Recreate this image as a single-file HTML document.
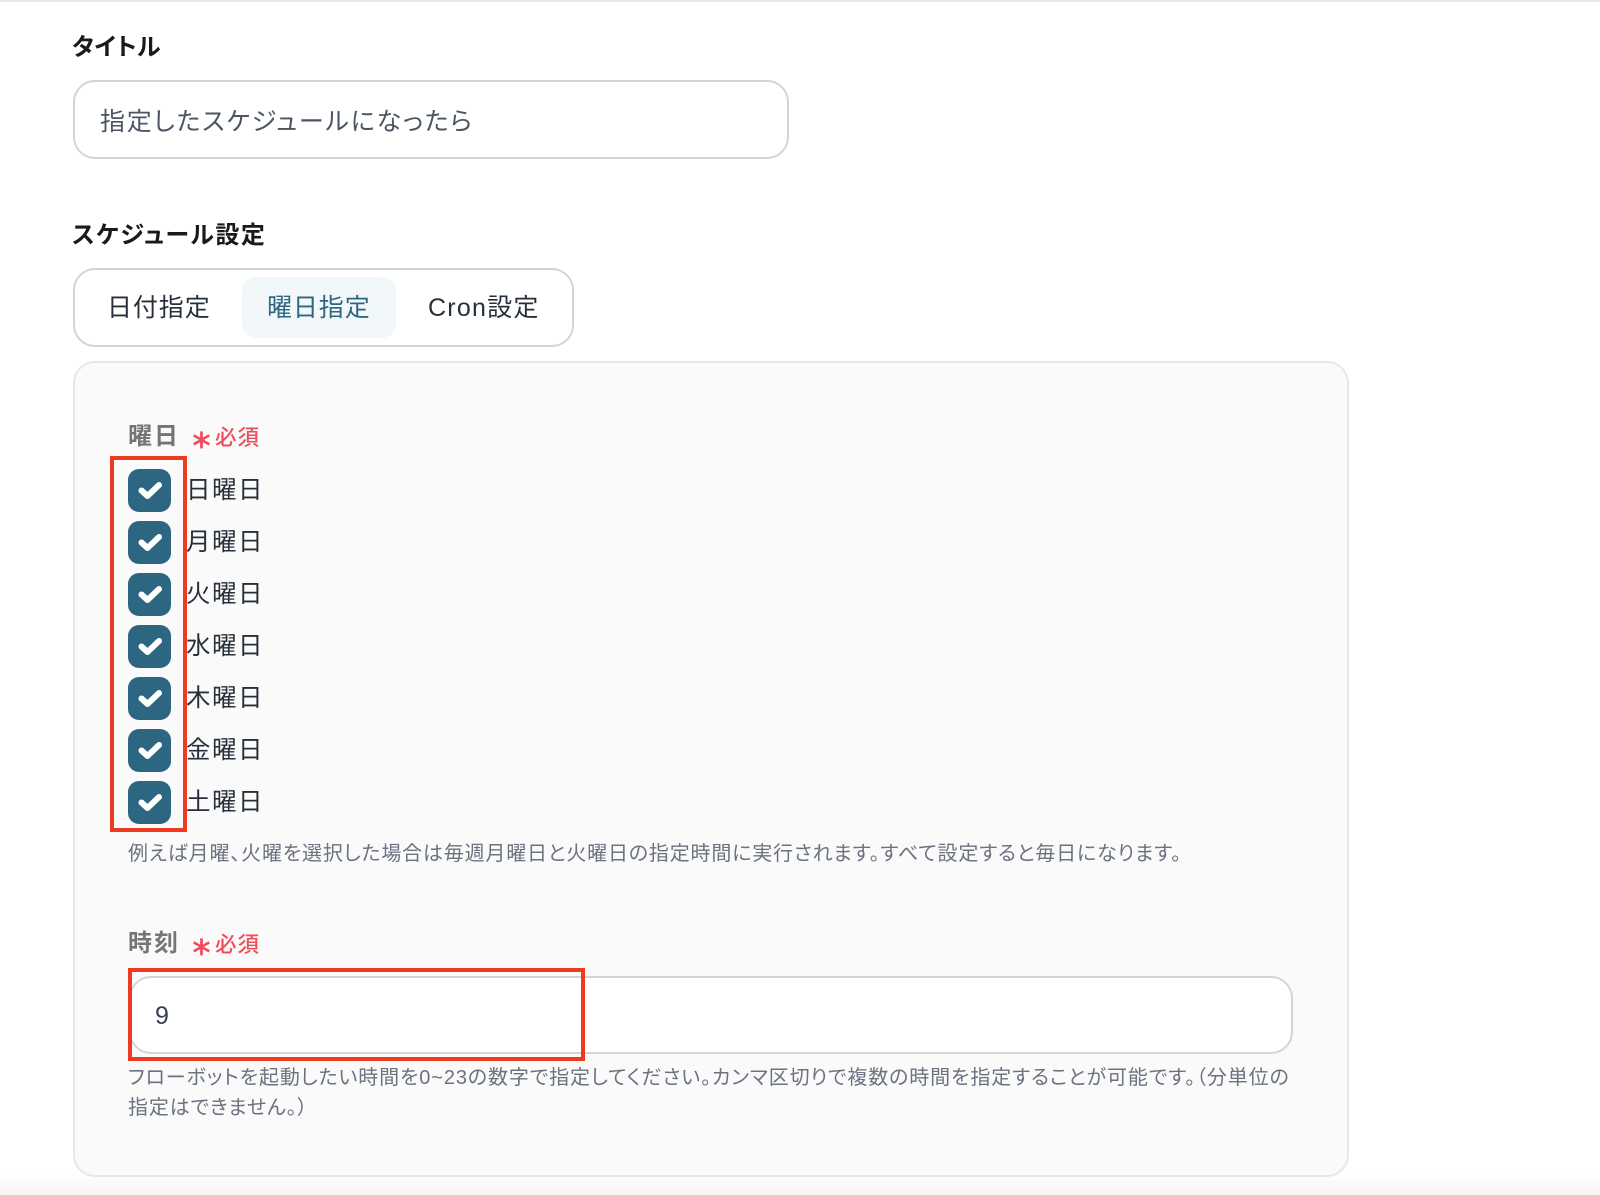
<!DOCTYPE html>
<html lang="ja">
<head>
<meta charset="utf-8">
<title>スケジュール設定</title>
<style>
html,body{margin:0;padding:0;background:#fff}
body{width:1600px;height:1195px;position:relative;overflow:hidden;font-family:"Liberation Sans","Noto Sans CJK JP",sans-serif;font-feature-settings:"palt"}
.a{position:absolute;white-space:nowrap}
.box{position:absolute;box-sizing:border-box;background:#fff;border:2px solid #d1d5db;border-radius:22px}
.h{font-size:24px;font-weight:700;color:#1a1a1a;line-height:30px}
.lab{font-size:24px;font-weight:700;color:#757575;line-height:30px;letter-spacing:2px}
.req{font-size:21.5px;font-weight:500;color:#ef4c5c;line-height:30px;letter-spacing:1px}
.star{font-family:"DejaVu Sans",sans-serif;font-size:36px;font-weight:400;color:#ef4c5c;line-height:30px;-webkit-text-stroke:.7px #ef4c5c}
.day{font-size:24.5px;color:#27303a;line-height:30px;letter-spacing:1.5px;left:186px}
.help{font-size:20px;color:#6b7280;line-height:30px;letter-spacing:.85px;left:128px}
.cb{position:absolute;left:128px;width:43px;height:43px;border-radius:11px;background:#2d6680}
.cb svg{display:block}
.red{position:absolute;box-sizing:border-box;border:4px solid #ee3a1f}
.tab{font-size:25px;line-height:30px;letter-spacing:.9px}
</style>
</head>
<body>
<div class="a" style="left:0;top:0;width:1600px;height:2px;background:#e7e7e7"></div>
<div class="a" style="left:0;top:1170px;width:1600px;height:25px;background:linear-gradient(#fff,#f6f6f6)"></div>

<div class="a h" style="left:72px;top:33px;letter-spacing:.5px">タイトル</div>
<div class="box" style="left:73px;top:80px;width:716px;height:79px"></div>
<div class="a" style="left:100px;top:107px;font-size:25px;line-height:30px;color:#4b5563;letter-spacing:1.8px">指定したスケジュールになったら</div>

<div class="a h" style="left:72px;top:221px;letter-spacing:1.5px">スケジュール設定</div>
<div class="box" style="left:73px;top:268px;width:501px;height:79px"></div>
<div class="a" style="left:242px;top:277px;width:154px;height:61px;border-radius:14px;background:#f2f8f9"></div>
<div class="a tab" style="left:107px;top:293px;color:#27303a">日付指定</div>
<div class="a tab" style="left:267px;top:293px;color:#2d6680">曜日指定</div>
<div class="a tab" style="left:428px;top:293px;color:#27303a;letter-spacing:1.25px">Cron設定</div>

<div class="box" style="left:73px;top:361px;width:1276px;height:816px;background:#fafafa;border-color:#e5e7eb"></div>

<div class="a lab" style="left:128px;top:422px">曜日</div>
<div class="a star" style="left:192.5px;top:431.5px">*</div>
<div class="a req" style="left:215px;top:423px">必須</div>

<div class="cb" style="top:469px"><svg width="43" height="43"><path d="M13.5 21.5L19.5 27L31 16" fill="none" stroke="#fff" stroke-width="6" stroke-linecap="round" stroke-linejoin="round"/></svg></div>
<div class="cb" style="top:521px"><svg width="43" height="43"><path d="M13.5 21.5L19.5 27L31 16" fill="none" stroke="#fff" stroke-width="6" stroke-linecap="round" stroke-linejoin="round"/></svg></div>
<div class="cb" style="top:573px"><svg width="43" height="43"><path d="M13.5 21.5L19.5 27L31 16" fill="none" stroke="#fff" stroke-width="6" stroke-linecap="round" stroke-linejoin="round"/></svg></div>
<div class="cb" style="top:625px"><svg width="43" height="43"><path d="M13.5 21.5L19.5 27L31 16" fill="none" stroke="#fff" stroke-width="6" stroke-linecap="round" stroke-linejoin="round"/></svg></div>
<div class="cb" style="top:677px"><svg width="43" height="43"><path d="M13.5 21.5L19.5 27L31 16" fill="none" stroke="#fff" stroke-width="6" stroke-linecap="round" stroke-linejoin="round"/></svg></div>
<div class="cb" style="top:729px"><svg width="43" height="43"><path d="M13.5 21.5L19.5 27L31 16" fill="none" stroke="#fff" stroke-width="6" stroke-linecap="round" stroke-linejoin="round"/></svg></div>
<div class="cb" style="top:781px"><svg width="43" height="43"><path d="M13.5 21.5L19.5 27L31 16" fill="none" stroke="#fff" stroke-width="6" stroke-linecap="round" stroke-linejoin="round"/></svg></div>

<div class="a day" style="top:476px">日曜日</div>
<div class="a day" style="top:528px">月曜日</div>
<div class="a day" style="top:580px">火曜日</div>
<div class="a day" style="top:632px">水曜日</div>
<div class="a day" style="top:684px">木曜日</div>
<div class="a day" style="top:736px">金曜日</div>
<div class="a day" style="top:787.5px">土曜日</div>

<div class="red" style="left:110px;top:456px;width:77px;height:376px"></div>

<div class="a help" style="top:839px;letter-spacing:.82px">例えば月曜、火曜を選択した場合は毎週月曜日と火曜日の指定時間に実行されます。すべて設定すると毎日になります。</div>

<div class="a lab" style="left:128px;top:929px">時刻</div>
<div class="a star" style="left:192.5px;top:938.5px">*</div>
<div class="a req" style="left:215px;top:930px">必須</div>

<div class="box" style="left:129px;top:976px;width:1164px;height:78px"></div>
<div class="a" style="left:155px;top:1001px;font-size:25px;line-height:30px;color:#374151">9</div>
<div class="red" style="left:128px;top:968px;width:457px;height:93px"></div>

<div class="a help" style="top:1063px;letter-spacing:.88px">フローボットを起動したい時間を0~23の数字で指定してください。カンマ区切りで複数の時間を指定することが可能です。（分単位の</div>
<div class="a help" style="top:1093px">指定はできません。）</div>
</body>
</html>
